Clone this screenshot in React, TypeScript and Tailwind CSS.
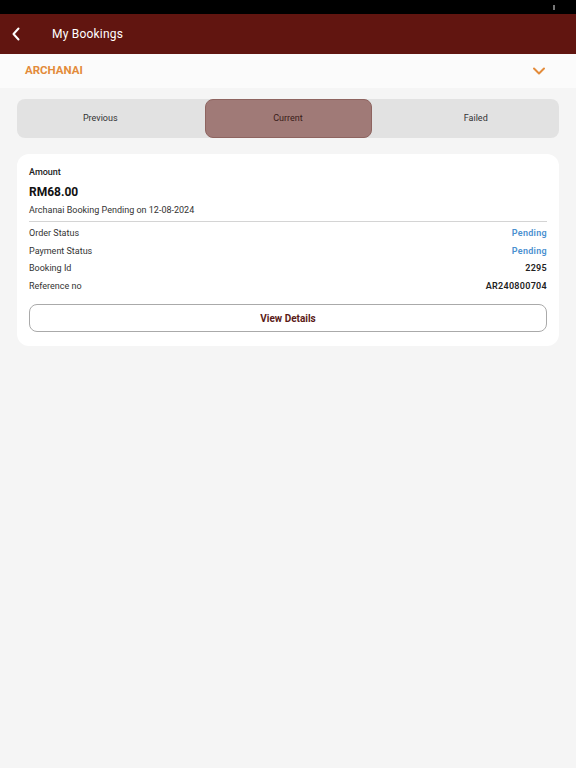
import React from "react";

export default function App() {
  const rows = [
    { label: "Order Status", value: "Pending", cls: "text-[#4a90d0]" },
    { label: "Payment Status", value: "Pending", cls: "text-[#4a90d0]" },
    { label: "Booking Id", value: "2295", cls: "text-[#222]" },
    { label: "Reference no", value: "AR240800704", cls: "text-[#222]" },
  ];
  return (
    <div className="w-[576px] h-[768px] bg-[#f5f5f5] flex flex-col" style={{ fontFamily: "Roboto, 'Noto Sans', sans-serif" }}>
      <div className="h-[14px] bg-black flex justify-end pr-[21px] items-center">
        <div className="w-[2px] h-[5px] bg-[#777]" />
      </div>
      <div className="h-[40px] bg-[#611510] flex items-center">
        <svg width="12" height="16" viewBox="0 0 12 16" className="ml-[10px]">
          <path d="M8.5 2.5 L3.5 8 L8.5 13.5" stroke="#fff" strokeWidth="2" fill="none" strokeLinecap="round" strokeLinejoin="round" />
        </svg>
        <span className="ml-[30px] text-white text-[12px] tracking-[0.2px]">My Bookings</span>
      </div>
      <div className="h-[34px] bg-[#fbfbfb] flex items-center justify-between pl-[25px] pr-[30px]">
        <span className="text-[#e38b3a] text-[11.5px] font-bold">ARCHANAI</span>
        <svg width="14" height="10" viewBox="0 0 14 10">
          <path d="M2 2.5 L7 7.5 L12 2.5" stroke="#e38b3a" strokeWidth="2" fill="none" strokeLinecap="round" strokeLinejoin="round" />
        </svg>
      </div>
      <div className="px-[17px] pt-[11px]">
        <div className="h-[39px] bg-[#e2e2e2] rounded-[8px] flex text-[9px] text-[#333]">
          <div className="flex-1 flex items-center justify-center pr-[21px]">Previous</div>
          <div className="w-[167px] bg-[#a07a77] border border-[#8e6460] rounded-[8px] flex items-center justify-center text-[#3a1a18]">Current</div>
          <div className="flex-1 flex items-center justify-center pl-[21px]">Failed</div>
        </div>
      </div>
      <div className="px-[17px] pt-[16px]">
        <div className="bg-white rounded-[12px] px-[12px] pt-[12px] pb-[14px]">
          <div className="text-[9px] font-medium text-[#222] leading-[12px]">Amount</div>
          <div className="text-[12px] font-bold text-[#111] mt-[7px] leading-[14px]">RM68.00</div>
          <div className="text-[9px] text-[#333] mt-[5px] leading-[12px]">Archanai Booking Pending on 12-08-2024</div>
          <div className="h-px bg-[#d4d4d4] mt-[5px]" />
          <div className="mt-[3px] flex flex-col">
            {rows.map((r) => (
              <div key={r.label} className="flex justify-between items-center h-[17.5px] text-[9px]">
                <span className="text-[#333]">{r.label}</span>
                <span className={`font-semibold tracking-[0.3px] ${r.cls}`}>{r.value}</span>
              </div>
            ))}
          </div>
          <div className="mt-[9px] h-[28px] border border-[#aaa] rounded-[8px] flex items-center justify-center text-[10px] font-bold text-[#5a1a16]">
            View Details
          </div>
        </div>
      </div>
    </div>
  );
}
